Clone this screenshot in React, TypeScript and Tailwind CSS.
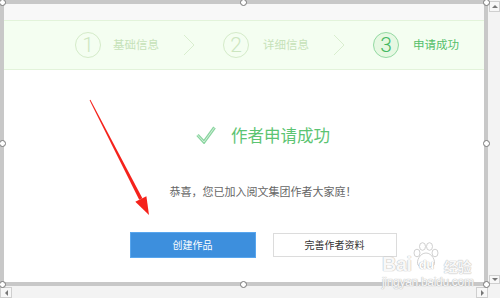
import React from "react";

function Handle({ x, y }: { x: number; y: number }) {
  return (
    <div
      className="absolute w-[7px] h-[7px] rounded-full bg-white border border-[#777]"
      style={{ left: x - 3.5, top: y - 3.5 }}
    />
  );
}

function Chevron() {
  return (
    <svg width="12" height="22" viewBox="0 0 12 22" className="shrink-0">
      <polyline points="1,1 11,11 1,21" fill="none" stroke="#d9eecf" strokeWidth="1" />
    </svg>
  );
}

function StepCircle({ n, active }: { n: number; active?: boolean }) {
  return (
    <div
      className={
        active
          ? "w-[26px] h-[26px] rounded-full border border-[#93d9a2] bg-[#e6f8e2] flex items-center justify-center text-[21px] leading-none text-[#45b862] font-['Roboto',sans-serif] font-light"
          : "w-[26px] h-[26px] rounded-full border border-[#d4ebc9] flex items-center justify-center text-[21px] leading-none text-[#cce6c0] font-['Roboto',sans-serif] font-light"
      }
    >
      {n}
    </div>
  );
}

export default function App() {
  return (
    <div className="w-[500px] h-[298px] relative bg-[#f3f3f3] overflow-hidden font-['Noto_Sans_CJK_SC',sans-serif]">
      <div className="flex h-[286px]">
        <div className="w-[488px] h-[286px] border-[4px] border-[#c8c8c8] bg-white overflow-hidden shrink-0">
          <div className="w-[518px] flex flex-col">
            <div className="h-[16px] bg-[#f8f8f8]" />
            <div className="h-[50px] bg-[#f4fef1] border-y border-[#e2f3da] flex items-center pl-[71px]">
              <StepCircle n={1} />
              <span className="ml-[12px] text-[11.5px] text-[#c6e2b9] leading-none">基础信息</span>
              <div className="ml-[24px]"><Chevron /></div>
              <div className="ml-[28px]"><StepCircle n={2} /></div>
              <span className="ml-[14px] text-[11.5px] text-[#c6e2b9] leading-none">详细信息</span>
              <div className="ml-[24px]"><Chevron /></div>
              <div className="ml-[28px]"><StepCircle n={3} active /></div>
              <span className="ml-[14px] text-[11.5px] text-[#55bf6a] leading-none">申请成功</span>
            </div>
            <div className="flex flex-col items-center">
              <div className="mt-[53px] h-[24px] flex items-center">
                <svg width="20" height="18" viewBox="0 0 20 18" className="shrink-0">
                  <polyline points="1.5,9 8,16 18.5,1.5" fill="none" stroke="#8bd5a0" strokeWidth="3.2" strokeLinejoin="miter" />
                  <polyline points="1.5,9 8,16 18.5,1.5" fill="none" stroke="#d2f0db" strokeWidth="1" strokeLinejoin="miter" />
                </svg>
                <span className="ml-[15px] text-[16.5px] leading-none text-[#5cc472]">作者申请成功</span>
              </div>
              <div className="mt-[36px] h-[16px] flex items-center text-[11px] text-[#666] leading-none">
                恭喜，您已加入阅文集团作者大家庭！
              </div>
              <div className="mt-[33px] flex items-center gap-[17px]">
                <div className="w-[126px] h-[26px] bg-[#3d8fdd] border border-[#58a6ee] flex items-center justify-center text-[10px] text-white leading-none">
                  创建作品
                </div>
                <div className="w-[124px] h-[24px] bg-white border border-[#dcdcdc] flex items-center justify-center text-[10px] text-[#333] leading-none">
                  完善作者资料
                </div>
              </div>
            </div>
          </div>
        </div>
        <div className="flex-1 flex flex-col justify-between bg-[#f3f3f3]">
          <div className="mt-[1px] ml-[1px] h-[11px] bg-[#f7f7f7] border border-[#cfcfcf] flex items-center justify-center">
            <div className="w-0 h-0 border-x-[3px] border-x-transparent border-b-[3px] border-b-[#777]" />
          </div>
          <div className="mb-[2px] ml-[1px] h-[9px] bg-[#f7f7f7] border border-[#cfcfcf] flex items-center justify-center">
            <div className="w-0 h-0 border-x-[3px] border-x-transparent border-t-[3px] border-t-[#777]" />
          </div>
        </div>
      </div>
      <div className="flex h-[12px]">
        <div className="w-[12px] h-[11px] mt-[1px] bg-[#f7f7f7] border border-[#cfcfcf] flex items-center justify-center">
          <div className="w-0 h-0 border-y-[3px] border-y-transparent border-r-[3px] border-r-[#777]" />
        </div>
        <div className="flex-1" />
        <div className="w-[12px] h-[11px] mt-[1px] mr-[12px] bg-[#f7f7f7] border border-[#cfcfcf] flex items-center justify-center">
          <div className="w-0 h-0 border-y-[3px] border-y-transparent border-l-[3px] border-l-[#777]" />
        </div>
      </div>

      {/* red arrow annotation */}
      <svg className="absolute left-0 top-0 pointer-events-none" width="500" height="298">
        <polygon points="89.6,100.2 90.4,99.8 142.4,198.2 139.2,199.8" fill="#f5221b" />
        <polygon points="149,215 135.3,201.8 146.4,196.2" fill="#f5221b" />
      </svg>

      {/* watermark */}
      <div className="absolute left-[382px] top-[242px] w-[92px] flex flex-col pointer-events-none text-white/90 [text-shadow:0_0_1px_#b5b5b5,0_0_1px_#b5b5b5]">
        <div className="relative h-[32px] flex items-end leading-none">
          <span className="text-[20px] font-bold font-['Liberation_Sans',sans-serif] tracking-tight">Bai</span>
          <div className="relative w-[30px] h-[32px] shrink-0">
            <svg width="26" height="26" viewBox="0 0 26 26" className="absolute left-[1px] top-0">
              <g fill="white" fillOpacity="0.85" stroke="#c4c4c4" strokeWidth="0.8">
                <ellipse cx="4" cy="11" rx="3" ry="3.8" />
                <ellipse cx="9.5" cy="4.5" rx="3" ry="3.8" />
                <ellipse cx="16.5" cy="4.5" rx="3" ry="3.8" />
                <ellipse cx="22" cy="11" rx="3" ry="3.8" />
                <path d="M13 11 C7 11 3 19 5 23 C7 26 19 26 21 23 C23 19 19 11 13 11 Z" />
              </g>
            </svg>
            <span className="absolute left-[7px] top-[16px] text-[13px] font-bold font-['Liberation_Sans',sans-serif] tracking-tight leading-none text-white">du</span>
          </div>
          <span className="ml-[2px] mb-[1px] text-[14px] font-bold">经验</span>
        </div>
        <div className="mt-[2px] text-[12px] leading-none font-['Liberation_Sans',sans-serif] tracking-tight">jingyan.baidu.com</div>
      </div>

      <Handle x={2} y={2} />
      <Handle x={243} y={2} />
      <Handle x={486} y={2} />
      <Handle x={2} y={143} />
      <Handle x={486} y={143} />
      <Handle x={2} y={284} />
      <Handle x={243} y={284} />
      <Handle x={486} y={284} />
    </div>
  );
}
